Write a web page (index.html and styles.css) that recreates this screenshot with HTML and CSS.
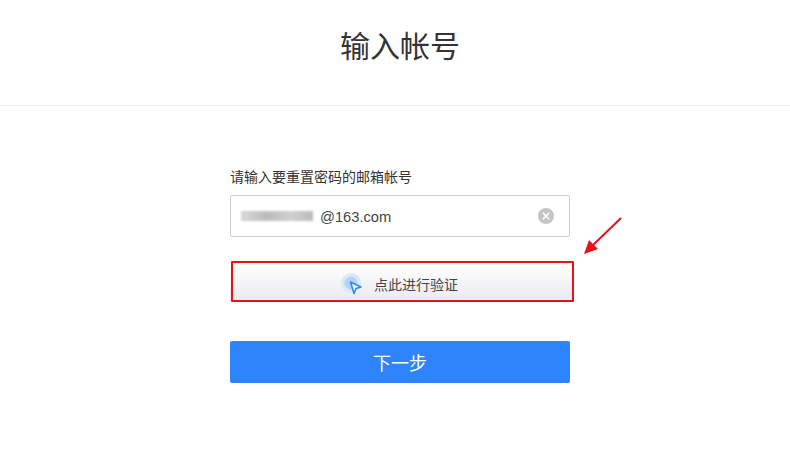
FILE: index.html
```html
<!DOCTYPE html>
<html>
<head>
    <title>输入帐号</title>
    <link rel="stylesheet" href="styles.css">
</head>
<body>
    <div class="page">
        <div class="header">
            <h1>输入帐号</h1>
        </div>
        <div class="form">
            <p class="label">请输入要重置密码的邮箱帐号</p>
            <div class="input-box">
                <span class="mask"></span>
                <span class="email">@163.com</span>
                <svg class="clear" width="16" height="16" viewBox="0 0 16 16">
                    <circle cx="8" cy="8" r="8" fill="#c4c4c4"/>
                    <path d="M4.8 4.8L11.2 11.2M11.2 4.8L4.8 11.2" stroke="#fff" stroke-width="1.6"/>
                </svg>
            </div>
            <div class="verify">
                <svg class="cursor" width="22" height="22" viewBox="0 0 22 22">
                    <circle cx="10" cy="10" r="10" fill="#dbe8f8"/>
                    <circle cx="10" cy="10" r="6.5" fill="#b5d2f5"/>
                    <path d="M9.5 9L20 14L15 15.5L13 20.5Z" fill="#eaf4fd" stroke="#2d8fe8" stroke-width="1.6" stroke-linejoin="round"/>
                </svg>
                <span>点此进行验证</span>
            </div>
            <button class="next">下一步</button>
        </div>
    </div>
    <!-- annotations drawn on top of the screenshot -->
    <div class="red-box"></div>
    <svg class="arrow" width="42" height="42" viewBox="0 0 42 42">
        <path d="M38 2L8 31" stroke="#ea1218" stroke-width="2" fill="none"/>
        <path d="M1 38L6 24L15 33Z" fill="#ea1218"/>
    </svg>
</body>
</html>
```

FILE: styles.css
```css
body {
    margin: 0;
    font-family: "Liberation Sans", "Noto Sans CJK SC", sans-serif;
    background-color: #ffffff;
    color: #333;
    overflow: hidden;
}
.page {
    width: 800px;
}
.header {
    height: 78px;
    border-bottom: 1px solid #eeeeee;
    display: flex;
    justify-content: center;
    padding-top: 27px;
}
h1 {
    margin: 0;
    font-size: 30px;
    font-weight: 400;
    line-height: 40px;
    color: #333;
}
.form {
    width: 340px;
    margin: 0 auto;
    padding-top: 62px;
}
.label {
    margin: 0 0 9px;
    font-size: 14px;
    line-height: 18px;
    color: #333;
}
.input-box {
    height: 40px;
    border: 1px solid #cccccc;
    border-radius: 2px;
    display: flex;
    align-items: center;
    padding: 0 15px 0 10px;
}
.mask {
    width: 72px;
    height: 10px;
    margin-right: 7px;
    background: linear-gradient(90deg, #d8d8d8 0%, #bdbdbd 35%, #cfcfcf 70%, #bcbcbc 100%);
    filter: blur(1px);
}
.email {
    font-size: 14.7px;
    line-height: 20px;
    padding-top: 2px;
    color: #444;
}
.clear {
    margin-left: auto;
}
.verify {
    width: 342px;
    height: 38px;
    box-sizing: border-box;
    padding: 4px 3px 0 0;
    margin-top: 26px;
    display: flex;
    align-items: center;
    justify-content: center;
    gap: 11px;
    font-size: 14px;
    color: #444;
    background: linear-gradient(180deg, #ffffff 0%, #f4f4f7 55%, #e9e9f0 100%);
}
.next {
    display: block;
    width: 100%;
    height: 42px;
    margin-top: 40px;
    padding: 0;
    border: none;
    border-radius: 2px;
    background-color: #2f84fb;
    color: #ffffff;
    font-family: inherit;
    font-size: 18px;
}
.red-box {
    position: absolute;
    left: 231px;
    top: 261px;
    width: 339px;
    height: 37px;
    border: 2px solid #ea1218;
    border-radius: 1px;
}
.arrow {
    position: absolute;
    left: 583px;
    top: 216px;
}
```
